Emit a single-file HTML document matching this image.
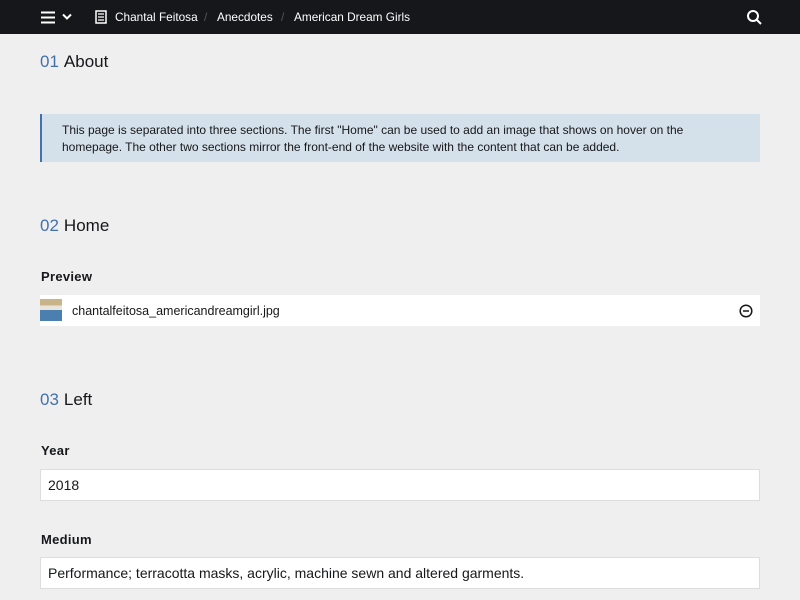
<!DOCTYPE html>
<html><head><style>
*{box-sizing:border-box;margin:0;padding:0}
body{width:800px;height:600px;overflow:hidden;background:#efefef;font-family:"Liberation Sans",sans-serif;color:#16171a;position:relative}
.top{position:absolute;left:0;top:0;width:800px;height:34px;background:#16171a;color:#fff;font-size:11.8px}
.top span{position:absolute;top:10px}
.sep{color:#555}
.h{position:absolute;left:40px;font-size:17px}
.h b{font-weight:normal;color:#4271ae;margin-right:5px}
.lab{position:absolute;left:41px;font-size:13px;font-weight:bold;letter-spacing:.3px}
.box{position:absolute;left:40px;width:720px;background:#fff;border:1px solid #ddd;font-size:14px;padding-left:7px}
</style></head><body>
<div class="top">
<svg style="position:absolute;left:40px;top:11px" width="16" height="13"><path d="M1 1.5h14M1 6.5h14M1 11.5h14" stroke="#fff" stroke-width="2"/></svg>
<svg style="position:absolute;left:62px;top:13px" width="10" height="8"><path d="M1 1.5l4 4 4-4" stroke="#fff" stroke-width="2" fill="none"/></svg>
<svg style="position:absolute;left:95px;top:10px" width="12" height="14"><rect x="1" y="1" width="10" height="12" fill="none" stroke="#fff" stroke-width="1.5"/><path d="M3 4h6M3 7h6M3 10h6" stroke="#fff" stroke-width="1.2"/></svg>
<span style="left:115px">Chantal Feitosa</span><span class="sep" style="left:204px">/</span>
<span style="left:217px">Anecdotes</span><span class="sep" style="left:281px">/</span>
<span style="left:294px">American Dream Girls</span>
<svg style="position:absolute;left:746px;top:9px" width="16" height="16"><circle cx="7" cy="7" r="5" stroke="#fff" stroke-width="2" fill="none"/><path d="M11 11l4 4" stroke="#fff" stroke-width="2"/></svg>
</div>
<div class="h" style="top:52px"><b>01</b>About</div>
<div style="position:absolute;left:40px;top:114px;width:720px;height:48px;background:#d5e1ea;border-left:2px solid #4271ae;font-size:12px;line-height:17px;padding:8px 20px;color:#16171a">This page is separated into three sections. The first "Home" can be used to add an image that shows on hover on the homepage. The other two sections mirror the front-end of the website with the content that can be added.</div>
<div class="h" style="top:216px"><b>02</b>Home</div>
<div class="lab" style="top:269px">Preview</div>
<div style="position:absolute;left:40px;top:295px;width:720px;height:31px;background:#fff;font-size:12.5px">
<div style="position:absolute;left:0;top:4px;width:22px;height:22px;background:linear-gradient(#c9b48a 30%,#e8e4da 30%,#e8e4da 50%,#4a7fb0 50%)"></div>
<span style="position:absolute;left:32px;top:9px">chantalfeitosa_americandreamgirl.jpg</span>
<svg style="position:absolute;left:699px;top:9px" width="14" height="14"><circle cx="7" cy="7" r="5.8" stroke="#16171a" stroke-width="1.5" fill="none"/><path d="M4 7h6" stroke="#16171a" stroke-width="1.5"/></svg>
</div>
<div class="h" style="top:390px"><b>03</b>Left</div>
<div class="lab" style="top:443px">Year</div>
<div class="box" style="top:469px;height:32px;line-height:30px">2018</div>
<div class="lab" style="top:532px">Medium</div>
<div class="box" style="top:557px;height:32px;line-height:30px">Performance; terracotta masks, acrylic, machine sewn and altered garments.</div>
</body></html>
